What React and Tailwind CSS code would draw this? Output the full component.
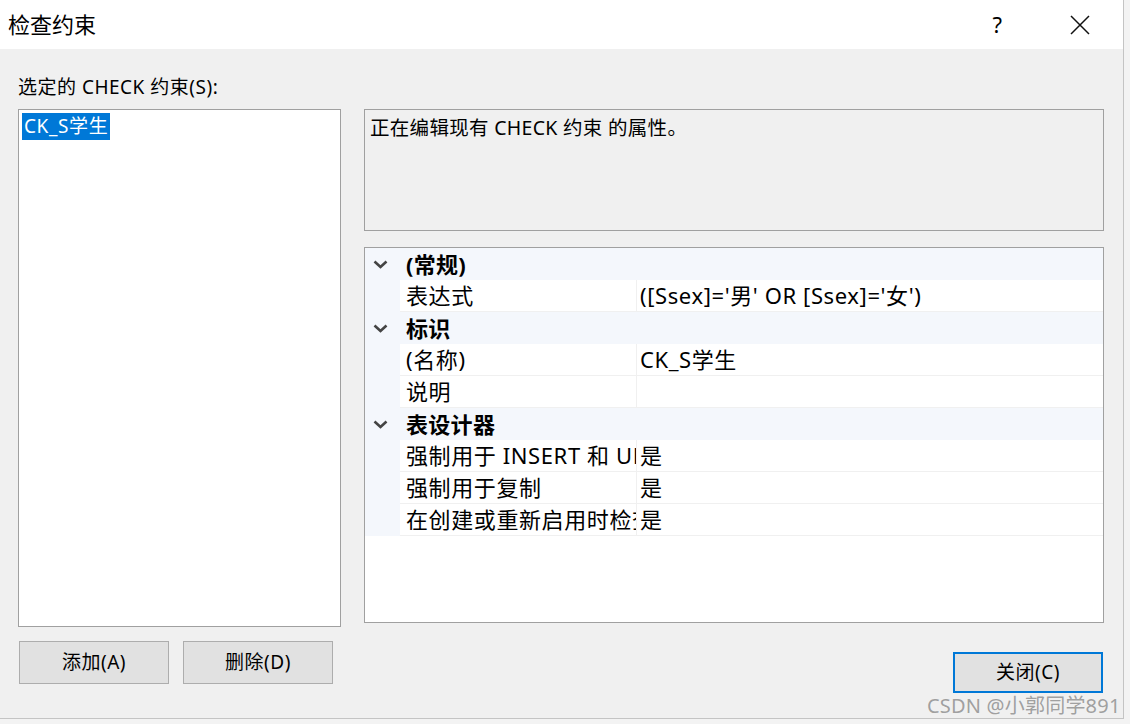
import React from 'react';

const font = { fontFamily: '"Noto Sans", "Noto Sans CJK SC", sans-serif' };

const sections = [
  {
    title: '(常规)',
    rows: [{ name: '表达式', value: "([Ssex]='男' OR [Ssex]='女')" }],
  },
  {
    title: '标识',
    rows: [
      { name: '(名称)', value: 'CK_S学生' },
      { name: '说明', value: '' },
    ],
  },
  {
    title: '表设计器',
    rows: [
      { name: '强制用于 INSERT 和 UPDATE', value: '是' },
      { name: '强制用于复制', value: '是' },
      { name: '在创建或重新启用时检查现有数据', value: '是' },
    ],
  },
];

const Chevron = () => (
  <svg width="15" height="9" viewBox="0 0 15 9" className="block">
    <path d="M1.5 1.5 L7.5 7 L13.5 1.5" fill="none" stroke="#444" strokeWidth="2.6" />
  </svg>
);

const PropertyGrid = () => (
  <div className="h-[376px] border border-[#a0a0a0] bg-white">
    {sections.map((section) => (
      <div key={section.title}>
        <div className="flex h-[32px] items-center bg-[#f4f7fc]">
          <div className="flex w-[35px] justify-center pr-[4px]">
            <Chevron />
          </div>
          <span className="pl-[6px] text-[22px] font-bold tracking-[0.3px] text-black">{section.title}</span>
        </div>
        {section.rows.map((row) => (
          <div key={row.name} className="flex h-[32px] bg-[#f4f7fc]">
            <div className="w-[35px] shrink-0" />
            <div className="flex w-[236px] shrink-0 items-center overflow-hidden whitespace-nowrap border-b border-[#f0f0f0] bg-white pl-[6px] text-[22px] tracking-[0.6px] text-black">
              {row.name}
            </div>
            <div className="w-px shrink-0 bg-[#f0f0f0]" />
            <div className="flex flex-1 items-center overflow-hidden whitespace-nowrap border-b border-[#f0f0f0] bg-white pl-[3px] text-[22px] tracking-[0.6px] text-black">
              {row.value}
            </div>
          </div>
        ))}
      </div>
    ))}
  </div>
);

const Button = ({ children, className = '' }) => (
  <button
    className={`flex h-[43px] w-[150px] items-center justify-center border border-[#adadad] bg-[#e1e1e1] text-[19px] tracking-[0.5px] text-black ${className}`}
  >
    {children}
  </button>
);

export default function App() {
  return (
    <div className="relative h-[724px] w-[1130px] overflow-hidden bg-[#f3f3f3]" style={font}>
      <div className="h-[719px] w-[1124px] border-r border-b border-[#c4c4c4] bg-[#f0f0f0]">
        {/* title bar */}
        <div className="flex h-[49px] items-center bg-white">
          <span className="pl-[8px] text-[22px] text-black">检查约束</span>
          <div className="ml-auto flex items-center">
            <span className="mr-[68px] text-[22px] text-black">?</span>
            <svg width="20" height="20" viewBox="0 0 20 20" className="mr-[33px]">
              <path d="M1 1 L19 19 M19 1 L1 19" stroke="#111" strokeWidth="1.5" />
            </svg>
          </div>
        </div>

        <div className="px-[18px] pt-[25px]">
          <div className="h-[26px] text-[19px] leading-[26px] tracking-[0.5px] text-black">选定的 CHECK 约束(S):</div>

          <div className="mt-[9px] flex gap-[23px]">
            {/* left column */}
            <div className="flex w-[323px] flex-col">
              <div className="h-[518px] border border-[#a0a0a0] bg-white p-[3px]">
                <span className="inline-block h-[27px] bg-[#0078d7] px-[2px] text-[19px] leading-[27px] tracking-[0.6px] text-white">
                  CK_S学生
                </span>
              </div>
              <div className="mt-[14px] flex gap-[14px] pl-[1px]">
                <Button>添加(A)</Button>
                <Button>删除(D)</Button>
              </div>
            </div>

            {/* right column */}
            <div className="flex w-[740px] flex-col">
              <div className="h-[122px] border border-[#a0a0a0] bg-[#f0f0f0] px-[5px] pt-[3px] text-[19.5px] tracking-[0.3px] text-black">
                正在编辑现有 CHECK 约束 的属性。
              </div>
              <div className="mt-[16px]">
                <PropertyGrid />
              </div>
              <div className="mt-[29px] flex justify-end pr-[1px]">
                <button className="flex h-[41px] w-[150px] items-center justify-center border-2 border-[#0078d7] bg-[#e1e1e1] text-[19px] tracking-[0.5px] text-black">
                  关闭(C)
                </button>
              </div>
            </div>
          </div>
        </div>
      </div>

      <div className="absolute left-[927px] top-[691px] text-[20px] tracking-[0.2px] text-[#8a8a8a]/80">
        CSDN @小郭同学891
      </div>
    </div>
  );
}
